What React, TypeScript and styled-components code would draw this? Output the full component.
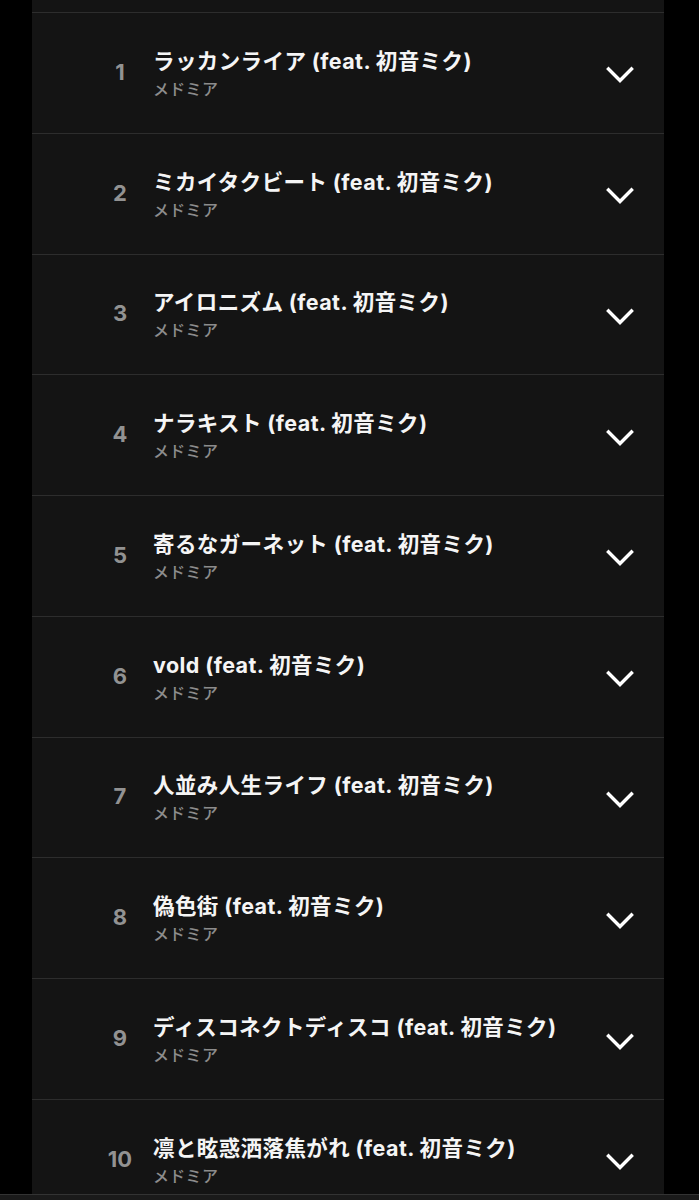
import React from "react";
import styled, { createGlobalStyle } from "styled-components";

const GlobalStyle = createGlobalStyle`
  html, body {
    margin: 0;
    padding: 0;
    background: #000;
  }
  body {
    font-family: Inter, "Noto Sans CJK JP", "Noto Sans", sans-serif;
    -webkit-font-smoothing: antialiased;
  }
`;

const Page = styled.div`
  position: relative;
  width: 699px;
  height: 1200px;
  overflow: hidden;
  background: #000;
`;

const Panel = styled.div`
  margin: 0 35px 0 32px;
  padding-top: 12px;
  background: #141414;
`;

const Row = styled.div`
  box-sizing: border-box;
  height: 120.78px;
  border-top: 1px solid #2d2d2d;
  display: grid;
  grid-template-columns: 48px 1fr 28px;
  column-gap: 9px;
  align-items: center;
  padding: 0 30px 0 64px;
`;

const Index = styled.div`
  text-align: center;
  font-family: Inter, "Liberation Sans", sans-serif;
  font-weight: 700;
  font-size: 22px;
  color: #929292;
  margin-top: -2px;
`;

const Texts = styled.div`
  display: flex;
  flex-direction: column;
  gap: 4px;
  min-width: 0;
`;

const Title = styled.div`
  font-family: Inter, "Noto Sans CJK JP", sans-serif;
  font-weight: 700;
  font-size: 21.5px;
  letter-spacing: 0.4px;
  line-height: 26px;
  color: #f5f5f5;
  white-space: nowrap;
`;

const Artist = styled.div`
  font-family: "Noto Sans CJK JP", sans-serif;
  font-weight: 500;
  font-size: 16px;
  letter-spacing: 0.3px;
  line-height: 20px;
  color: #8c8c8c;
`;

const Chevron = styled.svg`
  width: 28px;
  height: 20px;
  margin-top: 5px;
  display: block;
`;

const Footer = styled.div`
  position: absolute;
  left: 0;
  right: 0;
  bottom: 0;
  height: 5px;
  border-top: 1px solid #333;
  background: #1a1a1a;
`;

const tracks = [
  "ラッカンライア",
  "ミカイタクビート",
  "アイロニズム",
  "ナラキスト",
  "寄るなガーネット",
  "vold",
  "人並み人生ライフ",
  "偽色街",
  "ディスコネクトディスコ",
  "凛と眩惑洒落焦がれ",
];

export default function App() {
  return (
    <Page>
      <GlobalStyle />
      <Panel>
        {tracks.map((t, i) => (
          <Row key={i}>
            <Index>{i + 1}</Index>
            <Texts>
              <Title>{t} (feat. 初音ミク)</Title>
              <Artist>メドミア</Artist>
            </Texts>
            <Chevron viewBox="0 0 28 20">
              <polyline
                points="2.5,4 14,15.5 25.5,4"
                fill="none"
                stroke="#fff"
                strokeWidth="3.4"
                strokeLinecap="square"
                strokeLinejoin="miter"
              />
            </Chevron>
          </Row>
        ))}
      </Panel>
      <Footer />
    </Page>
  );
}
